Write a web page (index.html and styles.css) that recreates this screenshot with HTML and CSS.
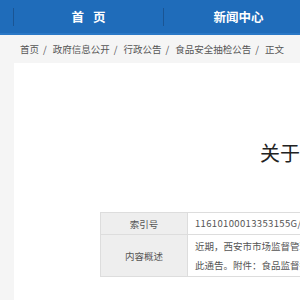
FILE: index.html
```html
<!DOCTYPE html>
<html lang="zh-CN">
<head>
<meta charset="utf-8">
<title>通告</title>
<link rel="stylesheet" href="styles.css">
</head>
<body>
<nav class="nav">
  <span class="nav-sep"></span>
  <a class="nav-item" href="#"><span class="spaced">首</span>页</a>
  <span class="nav-sep"></span>
  <a class="nav-item" href="#">新闻中心</a>
</nav>
<div class="crumbs">
  <a href="#">首页</a><span class="sep">/</span><a href="#">政府信息公开</a><span class="sep">/</span><a href="#">行政公告</a><span class="sep">/</span><a href="#">食品安全抽检公告</a><span class="sep">/</span><span>正文</span>
</div>
<main class="panel">
  <h1 class="title">关于食品安全监督抽检信息的通告</h1>
  <table class="meta">
    <tr>
      <th>索引号</th>
      <td class="num">11610100013353155G/2021-00123</td>
    </tr>
    <tr class="tall">
      <th>内容概述</th>
      <td>近期，西安市市场监督管理局组织抽检了部分食品，现将抽检结果予以公布，特<br>此通告。附件：食品监督抽检产品合格信息</td>
    </tr>
  </table>
</main>
</body>
</html>
```
FILE: styles.css
```css
html, body {
  margin: 0;
  padding: 0;
  overflow: hidden;
}
body {
  background: #f5f5f5;
  font-family: "Noto Sans CJK SC", "Noto Sans", sans-serif;
  width: 300px;
  height: 300px;
}
a {
  color: inherit;
  text-decoration: none;
}
.nav {
  display: flex;
  align-items: center;
  height: 33px;
  background: #1f6cba;
  border-bottom: 2px solid #2a78c6;
  padding-left: 13px;
  width: 1000px;
}
.nav-sep {
  width: 1px;
  height: 18px;
  background: #1a5594;
  flex: none;
}
.nav-item {
  width: 149px;
  flex: none;
  text-align: center;
  color: #fff;
  font-weight: bold;
  font-size: 12.5px;
  line-height: 18px;
}
.spaced {
  margin-right: 9px;
}
.crumbs {
  height: 28px;
  line-height: 28px;
  padding-left: 20px;
  font-size: 9.5px;
  color: #555;
  white-space: nowrap;
}
.sep {
  margin: 0 6px 0 4px;
}
.panel {
  margin-left: 14px;
  background: #fff;
  width: 1000px;
  height: 400px;
  padding-top: 76px;
}
.title {
  margin: 0 0 0 246px;
  font-size: 20px;
  font-weight: normal;
  color: #222;
  line-height: 28px;
  white-space: nowrap;
}
.meta {
  margin: 45px 0 0 86px;
  border-collapse: collapse;
  font-size: 9.5px;
  color: #555;
  width: 900px;
}
.meta th, .meta td {
  border: 1px solid #dddddd;
  height: 21px;
  padding: 0;
  font-weight: normal;
}
.meta th {
  width: 86px;
  background: #eeeeee;
  text-align: center;
}
.meta td {
  text-align: left;
  padding-left: 7px;
  line-height: 19px;
  white-space: nowrap;
}
.meta .num {
  letter-spacing: 0.35px;
}
.meta .tall th, .meta .tall td {
  height: 41px;
}
```
